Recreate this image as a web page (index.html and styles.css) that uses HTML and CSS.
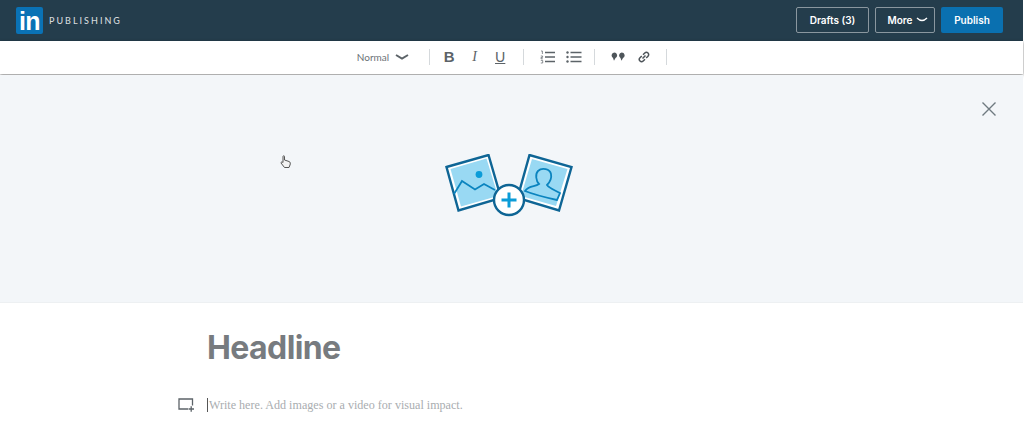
FILE: index.html
```html
<!DOCTYPE html>
<html lang="en">
<head>
    <meta charset="UTF-8">
    <meta name="viewport" content="width=device-width, initial-scale=1.0">
    <title>LinkedIn Publishing</title>
    <link rel="stylesheet" href="styles.css">
</head>
<body>

    <div class="topBar">
        <div class="brand">
            <div class="logo">
                <span class="logoText">in</span>
            </div>
            <span class="brandName">PUBLISHING</span>
        </div>
        <div class="topActions">
            <button class="outlineButton draftsButton">Drafts (3)</button>
            <button class="outlineButton moreButton">More
                <svg class="moreArrow" viewBox="0 0 12 6" width="12" height="6"><path d="M1 1 Q6 6 11 1" fill="none" stroke="#fff" stroke-width="1.4"/></svg>
            </button>
            <button class="publishButton">Publish</button>
        </div>
    </div>

    <div class="toolbar">
        <div class="toolGroup styleGroup">
            <span class="styleName">Normal</span>
            <svg viewBox="0 0 14 6" width="14" height="6"><path d="M1 1 L7 4.5 L13 1" fill="none" stroke="#5c6368" stroke-width="2"/></svg>
        </div>
        <div class="toolGroup textGroup">
            <span class="toolLetter boldLetter">B</span>
            <span class="toolLetter italicLetter">I</span>
            <span class="toolLetter underLetter">U</span>
        </div>
        <div class="toolGroup listGroup">
            <svg viewBox="0 0 16 14" width="16" height="14">
                <path d="M5 2.5H15M5 7H15M5 11.5H15" stroke="#5c6368" stroke-width="1.5"/>
                <path d="M1 1H2.4V4M.8 6H2.6V7.4H1V8.8H2.8M.8 10.4H2.7V13H.8" fill="none" stroke="#5c6368" stroke-width=".7"/>
            </svg>
            <svg viewBox="0 0 16 14" width="16" height="14">
                <path d="M4.500 2.500H15.500M4.500 7H15.500M4.500 11.500H15.500" stroke="#5c6368" stroke-width="1.500"/>
                <circle cx="1.500" cy="2.500" r="1.200" fill="#5c6368"/>
                <circle cx="1.500" cy="7" r="1.200" fill="#5c6368"/>
                <circle cx="1.500" cy="11.500" r="1.200" fill="#5c6368"/>
            </svg>
        </div>
        <div class="toolGroup insertGroup">
            <svg viewBox="0 0 14 9" width="14" height="9">
                <path d="M3.200 .5A2.900 2.900 0 0 1 4.500 6L3 8.800 2 6A3 3 0 0 1 3.200 .5ZM10.700 .5A2.900 2.900 0 0 1 12 6L10.500 8.800 9.500 6A3 3 0 0 1 10.700 .5Z" fill="#4e555a"/>
            </svg>
            <svg viewBox="0 0 12 12" width="12" height="12">
                <path d="M5 3.800 6.800 2A2.100 2.100 0 0 1 10 5.200L8.200 7M7 8.200 5.200 10A2.100 2.100 0 0 1 2 6.800L3.800 5M4.500 7.500 7.500 4.500" fill="none" stroke="#4e555a" stroke-width="1.500"/>
            </svg>
        </div>
    </div>

    <div class="coverArea">
        <!-- cover image placeholder -->
        <svg class="coverArt" viewBox="0 0 128 64" width="128" height="64">
            <polygon points="1.500,13 43.500,1 56,44 13.500,56.500" fill="#fff" stroke="#0e6595" stroke-width="2.400"/>
            <polygon points="5.500,15 41.500,4.500 53,42 16,52.500" fill="#99d9f3"/>
            <path d="M9 40 17 27 30 35.500 39 30 50 36" fill="none" stroke="#0b84bf" stroke-width="1.800"/>
            <circle cx="34" cy="20.500" r="3.400" fill="#0b9cd8"/>
            <polygon points="84.500,1 126.500,13 114,56.500 72.500,44" fill="#fff" stroke="#0e6595" stroke-width="2.400"/>
            <polygon points="87,5 122.500,15 111,52 76,42" fill="#99d9f3"/>
            <path d="M80 37C84 31 90 33 94 30C91 27 90 20 93 17C97 13 105 15 106 20C107 25 104 29 102 31C105 35 110 36 115 39L112 46C103 44 90 41 80 37Z" fill="none" stroke="#0b84bf" stroke-width="1.800"/>
            <circle cx="64" cy="46" r="15" fill="#fff" stroke="#0e6595" stroke-width="2.400"/>
            <path d="M56.500 46H71.500M64 38.500V53.500" stroke="#0b9cd8" stroke-width="3"/>
        </svg>
        <svg class="closeIcon" viewBox="0 0 14 14" width="14" height="14"><path d="M.5 .5 13.500 13.500M13.500 .5 .5 13.500" stroke="#6f7a80" stroke-width="1.400"/></svg>
        <svg class="handCursor" viewBox="0 0 12 14" width="12" height="14">
            <path d="M3 1.500C3 .5 4.500 .5 4.500 1.500V5L9 6.500C10.500 7 10.500 8.500 10 10L9 12.500H4.500L1 8C.8 7 2 6.500 3 7.500Z" fill="#f3f3f3" stroke="#555" stroke-width="1"/>
        </svg>
    </div>

    <div class="editor">
        <h1 class="headline">Headline</h1>
        <div class="bodyRow">
            <svg class="addMedia" viewBox="0 0 16 14" width="16" height="14">
                <path d="M10 11H1V1H14.500V7.500" fill="none" stroke="#5c6368" stroke-width="1.300"/>
                <path d="M10.500 11H16M13.200 8.200V13.800" stroke="#5c6368" stroke-width="1.300"/>
            </svg>
            <p class="bodyText">Write here. Add images or a video for visual impact.</p>
        </div>
    </div>

</body>
</html>
```

FILE: styles.css
```css
html,
body {
    height: 100%;
}

body {
    margin: 0;
    padding-right: 1px;
    box-sizing: border-box;
    overflow: hidden;
    background-color: #fff;
    font-family: "Inter", "Liberation Sans", sans-serif;
}

.topBar {
    display: flex;
    justify-content: space-between;
    align-items: center;
    height: 41px;
    box-sizing: border-box;
    padding: 0 20px 1px 16px;
    background-color: #243d4c;
}

.brand {
    display: flex;
    align-items: center;
    gap: 6px;
}

.logo {
    display: flex;
    align-items: flex-end;
    justify-content: center;
    width: 27px;
    height: 27px;
    border-radius: 2px;
    background-color: #0a72b5;
}

.logoText {
    font-family: "Liberation Sans", sans-serif;
    font-size: 25px;
    font-weight: bold;
    line-height: 25px;
    letter-spacing: -0.5px;
    color: #fff;
}

.brandName {
    font-family: "Lato", sans-serif;
    font-size: 9px;
    font-weight: 500;
    letter-spacing: 2px;
    color: #d5dadd;
}

.topActions {
    display: flex;
    gap: 6px;
}

.outlineButton,
.publishButton {
    height: 26px;
    padding: 0;
    border-radius: 2px;
    font-family: inherit;
    font-size: 10px;
    font-weight: 600;
    color: #fff;
}

.outlineButton {
    border: 1px solid #8a979f;
    background: none;
}

.draftsButton {
    width: 73px;
}

.moreButton {
    display: flex;
    align-items: center;
    justify-content: center;
    gap: 4px;
    width: 60px;
    padding-left: 6px;
    box-sizing: border-box;
}

.publishButton {
    width: 62px;
    border: none;
    background-color: #0a70b0;
}

.toolbar {
    position: relative;
    display: flex;
    justify-content: center;
    height: 33px;
    padding-left: 1px;
    background-color: #fff;
    box-shadow: 0 1px 3px rgba(0, 0, 0, 0.5);
}

.toolGroup {
    display: flex;
    align-items: center;
    align-self: center;
    height: 16px;
    margin-top: -2px;
    border-right: 1px solid #d5d9dc;
}

.styleGroup {
    gap: 6px;
    padding-right: 20px;
}

.styleName {
    font-family: "Lato", sans-serif;
    font-size: 10px;
    color: #6b7277;
}

.textGroup {
    gap: 13.500px;
    padding: 0 17px 0 13px;
}

.toolLetter {
    width: 12px;
    text-align: center;
    font-size: 14px;
    color: #5c6368;
}

.boldLetter {
    font-family: "Liberation Sans", sans-serif;
    font-weight: bold;
    font-size: 15px;
}

.italicLetter {
    font-family: "Liberation Serif", serif;
    font-style: italic;
}

.underLetter {
    font-family: "Lato", sans-serif;
    text-decoration: underline;
}

.listGroup {
    gap: 10px;
    padding: 0 12px 0 16px;
}

.insertGroup {
    gap: 13px;
    padding: 0 16px 0 16px;
}

.coverArea {
    position: relative;
    display: flex;
    justify-content: center;
    height: 227px;
    margin-top: 1px;
    padding-top: 79px;
    padding-right: 6px;
    box-sizing: border-box;
    background-color: #f3f6f9;
}

.coverArt {
    display: block;
}

.closeIcon {
    position: absolute;
    top: 27px;
    right: 27px;
}

.handCursor {
    position: absolute;
    top: 80px;
    left: 280px;
}

.editor {
    padding: 25px 0 0 178px;
    border-top: 1px solid #edf0f2;
}

.headline {
    margin: 0 0 0 29px;
    font-size: 32px;
    font-weight: 700;
    line-height: 40px;
    letter-spacing: -0.6px;
    color: #777b7f;
}

.bodyRow {
    display: flex;
    align-items: center;
    gap: 13px;
    margin-top: 30px;
}

.bodyText {
    margin: 0;
    padding-left: 1px;
    border-left: 1px solid #555;
    font-family: "Liberation Serif", serif;
    font-size: 12.100px;
    line-height: 14px;
    color: #a9adb0;
}
```
